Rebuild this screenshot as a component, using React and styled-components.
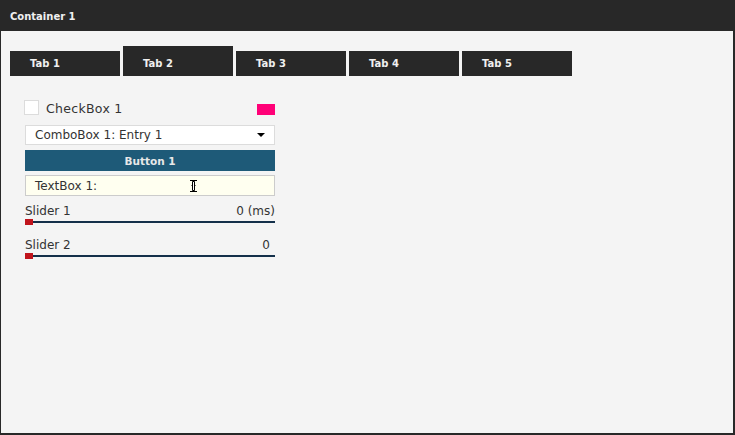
import React from 'react';
import styled, { createGlobalStyle } from 'styled-components';

const Global = createGlobalStyle`
  html, body { margin: 0; padding: 0; }
  body { background: #f4f4f4; font-family: "DejaVu Sans", Verdana, sans-serif; }
`;

const Window = styled.div`
  box-sizing: border-box;
  width: 735px;
  height: 435px;
  background: #f4f4f4;
  border: 1px solid #282828;
  border-right-width: 2px;
  border-bottom-width: 2px;
  display: flex;
  flex-direction: column;
`;

const TitleBar = styled.div`
  height: 30px;
  background: #282828;
  color: #f0f0f0;
  font-size: 10px;
  font-weight: bold;
  display: flex;
  align-items: center;
  padding-left: 9px;
  flex-shrink: 0;
`;

const TabRow = styled.div`
  display: flex;
  align-items: flex-end;
  gap: 3px;
  padding: 15px 0 0 9px;
  height: 30px;
`;

const Tab = styled.div`
  width: 110px;
  height: ${p => (p.$active ? 30 : 25)}px;
  box-sizing: border-box;
  background: #282828;
  color: #f0f0f0;
  font-size: 10px;
  font-weight: bold;
  padding: ${p => (p.$active ? 5 : 0)}px 0 0 20px;
  display: flex;
  align-items: center;
`;

const Panel = styled.div`
  width: 250px;
  padding: 24px 0 0 24px;
  display: flex;
  flex-direction: column;
  color: #333;
  font-size: 12px;
`;

const CheckRow = styled.div`
  display: flex;
  align-items: center;
  height: 15px;
  margin-left: -1px;
`;

const CheckBox = styled.div`
  width: 15px;
  height: 15px;
  box-sizing: border-box;
  background: #fff;
  border: 1px solid #dcdcdc;
  margin-right: 7px;
`;

const CheckLabel = styled.span`
  flex: 1;
  font-size: 12.5px;
  letter-spacing: 0.3px;
  padding-top: 2px;
`;

const Swatch = styled.div`
  width: 18px;
  height: 11px;
  background: #ff0077;
  align-self: flex-end;
`;

const Combo = styled.div`
  margin-top: 10px;
  height: 20px;
  box-sizing: border-box;
  background: #fff;
  border: 1px solid #dcdcdc;
  display: flex;
  align-items: center;
  justify-content: space-between;
  padding: 0 9px 0 9px;
`;

const Arrow = styled.span`
  width: 0;
  height: 0;
  border-left: 4px solid transparent;
  border-right: 4px solid transparent;
  border-top: 4px solid #000;
`;

const Button = styled.div`
  margin-top: 5px;
  height: 21px;
  background: #1e5a78;
  color: #e8e8e8;
  font-size: 10.5px;
  font-weight: bold;
  display: flex;
  align-items: center;
  justify-content: center;
`;

const TextBox = styled.div`
  margin-top: 4px;
  height: 21px;
  box-sizing: border-box;
  background: #fffff0;
  border: 1px solid #cccccc;
  display: flex;
  align-items: center;
  padding-left: 9px;
  position: relative;
`;

const Cursor = styled.svg`
  position: absolute;
  left: 163px;
  top: 4px;
`;

const SliderBlock = styled.div`
  margin-top: ${p => p.$gap}px;
  display: flex;
  flex-direction: column;
`;

const SliderHead = styled.div`
  display: flex;
  justify-content: space-between;
  height: 14px;
  line-height: 14px;
  padding-right: ${p => p.$pad || 0}px;
`;

const Track = styled.div`
  position: relative;
  margin-top: 3px;
  height: 2px;
  background: #14304a;
`;

const Thumb = styled.div`
  position: absolute;
  left: 0;
  top: -2px;
  width: 8px;
  height: 6px;
  background: #c0141c;
`;

const Slider = ({ label, value, gap, pad }) => (
  <SliderBlock $gap={gap}>
    <SliderHead $pad={pad}>
      <span>{label}</span>
      <span>{value}</span>
    </SliderHead>
    <Track>
      <Thumb />
    </Track>
  </SliderBlock>
);

export default function App() {
  const tabs = ['Tab 1', 'Tab 2', 'Tab 3', 'Tab 4', 'Tab 5'];
  return (
    <>
      <Global />
      <Window>
        <TitleBar>Container 1</TitleBar>
        <TabRow>
          {tabs.map((t, i) => (
            <Tab key={t} $active={i === 1}>{t}</Tab>
          ))}
        </TabRow>
        <Panel>
          <CheckRow>
            <CheckBox />
            <CheckLabel>CheckBox 1</CheckLabel>
            <Swatch />
          </CheckRow>
          <Combo>
            <span>ComboBox 1: Entry 1</span>
            <Arrow />
          </Combo>
          <Button>Button 1</Button>
          <TextBox>
            TextBox 1:
            <Cursor width="9" height="12" viewBox="0 0 9 12">
              <path d="M1 0.5h7M1 11.5h7M4.5 0.5v11M2.5 5.5h4" stroke="#000" strokeWidth="1" fill="none" />
              <path d="M3.5 1.5h2v9h-2z" fill="#fff" stroke="#000" strokeWidth="1" />
            </Cursor>
          </TextBox>
          <Slider label="Slider 1" value="0 (ms)" gap={8} />
          <Slider label="Slider 2" value="0" gap={15} pad={5} />
        </Panel>
      </Window>
    </>
  );
}
